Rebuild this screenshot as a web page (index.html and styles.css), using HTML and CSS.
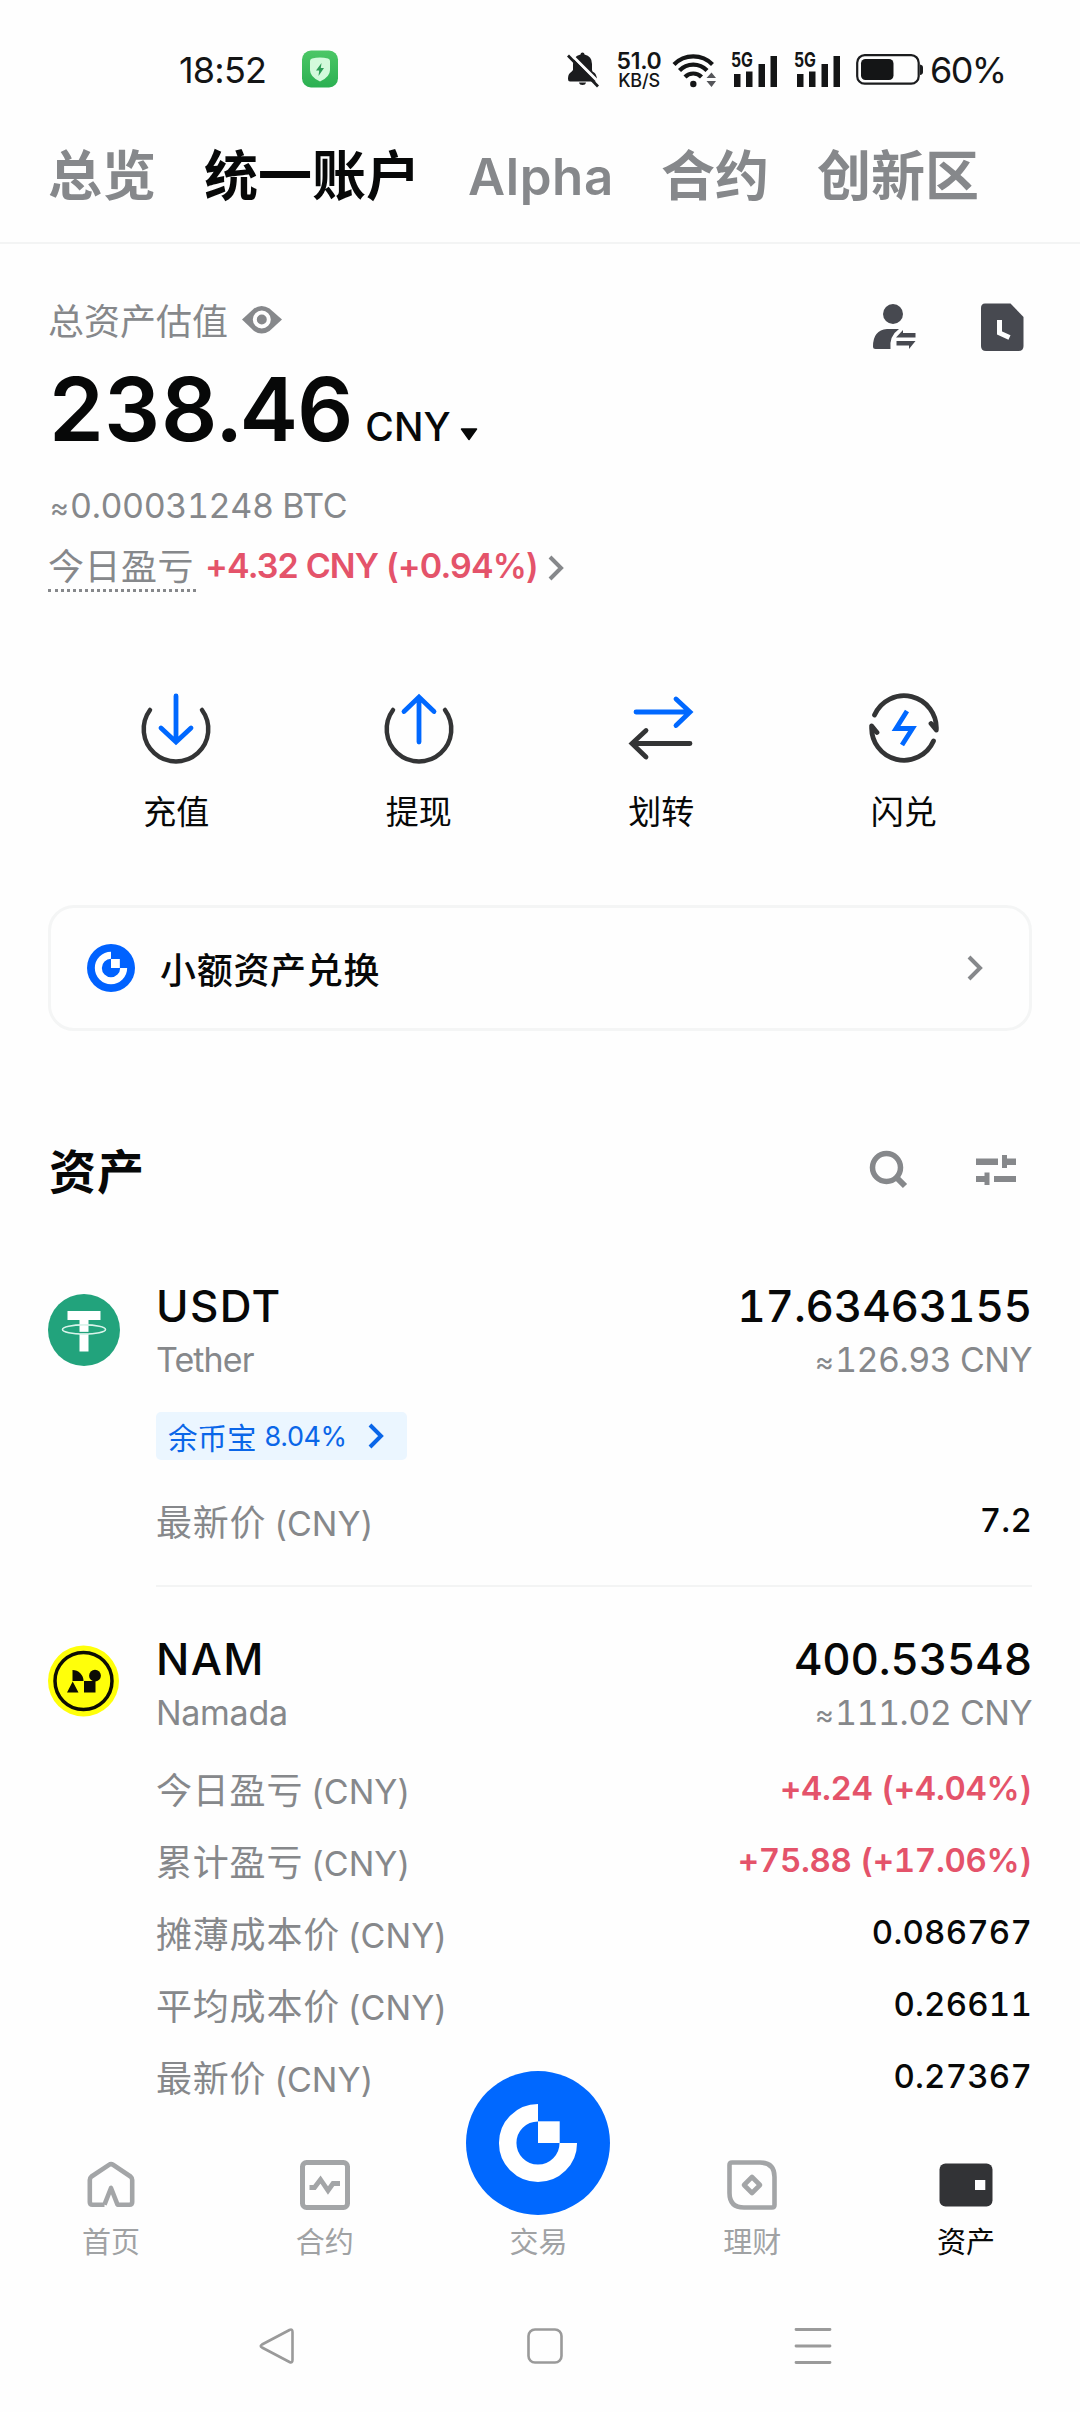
FILE: index.html
```html
<!DOCTYPE html>
<html lang="zh-CN">
<head>
<meta charset="utf-8">
<title>统一账户</title>
<link rel="stylesheet" href="styles.css">
</head>
<body>
<header class="status">
  <span class="status__time">18:52</span>
  <svg class="status__guard" width="36" height="38" viewBox="0 0 36 38"><defs><linearGradient id="guard" x1="0" y1="0" x2="0" y2="1"><stop offset="0" stop-color="#4cc766"/><stop offset="1" stop-color="#2bb052"/></linearGradient></defs><rect y=".5" width="36" height="37" rx="9" fill="url(#guard)"/><path d="M10 8.5Q18 6.500 26 8.500Q28 9 28 11V20Q28 27 18 31.500Q8 27 8 20V11Q8 9 10 8.500Z" fill="#d3fadb"/><path d="M19.500 13L14 20.500H17.200L16.500 26L22 18H18.800Z" fill="#2c9c55"/></svg>
  <svg class="status__bell" width="34" height="40" viewBox="0 0 34 40"><path d="M14.500 4.500Q14.500 2.500 16.500 2.500T18.500 4.500Q26 6 26 14V20Q26 21.500 28 22.500T31 28.500Q31 31.500 29 31.500H4Q2 31.500 2 29Q2 24.500 4 23T7 20V14Q7 6 14.500 4.500ZM13 32.500H20Q19.500 35 16.500 35T13 32.500Z" fill="#1b1c1e"/><path d="M3 2.500L34 33.500" stroke="#fefefe" stroke-width="3"/><path d="M2 5.500L32 36.500" stroke="#1b1c1e" stroke-width="2.800"/></svg>
  <span class="status__speed"><b>51.0</b><i>KB/S</i></span>
  <svg class="status__wifi" width="44" height="40" viewBox="0 0 44 40"><g fill="none" stroke="#141516" stroke-width="4.200"><path d="M2 14.500A27 27 0 0 1 40.500 14.500"/><path d="M7.500 20.500A19 19 0 0 1 35 20.500"/><path d="M13 27A11.500 11.500 0 0 1 29.500 27"/></g><circle cx="21.300" cy="34" r="3.200" fill="#141516"/><path d="M34.500 28L39.500 22.500L44 28ZM34.500 31L39.500 37L44 31Z" fill="#55565a"/></svg>
  <svg class="status__signal" width="48" height="40" viewBox="0 0 48 40"><text x="1" y="17" textLength="22" lengthAdjust="spacingAndGlyphs">5G</text><path d="M4 24h6.500v13H4zM16 21.500h6.500v15.500H16zM28.500 14H35v23h-6.500zM40.500 6H47v31h-6.500z" fill="#141516"/></svg>
  <svg class="status__signal" width="48" height="40" viewBox="0 0 48 40"><text x="1" y="17" textLength="22" lengthAdjust="spacingAndGlyphs">5G</text><path d="M4 24h6.500v13H4zM16 21.500h6.500v15.500H16zM28.500 14H35v23h-6.500zM40.500 6H47v31h-6.500z" fill="#141516"/></svg>
  <svg class="status__battery" width="68" height="40" viewBox="0 0 68 40"><rect x="1.200" y="5.200" width="61.500" height="28.500" rx="7.500" fill="none" stroke="#1b1c1e" stroke-width="2.200"/><rect x="5" y="9" width="32.500" height="21" rx="4.500" fill="#141516"/><path d="M64 14.500q3 .5 3 3v4.500q0 2.500-3 3z" fill="#1b1c1e"/></svg>
  <span class="status__percent">60%</span>
</header>

<nav class="tabs">
  <a>总览</a><a class="tabs__on">统一账户</a><a class="tabs__latin">Alpha</a><a>合约</a><a>创新区</a>
</nav>

<main class="page">
  <section class="overview">
    <div class="overview__main">
      <div class="overview__label">总资产估值
        <svg width="42" height="30" viewBox="0 0 42 30"><path d="M1 14.500L13 3.500Q20.500-1.500 28.500 3.500L41 14.500L28.500 26Q20.500 31 13 26Z" fill="#86888b"/><circle cx="20.800" cy="14.500" r="7" fill="#86888b" stroke="#fefefe" stroke-width="4"/></svg>
      </div>
      <div class="overview__total"><strong>238.46</strong><span>CNY</span><svg width="18" height="13" viewBox="0 0 18 13"><path d="M1.500 1H16.500L9 11.500Z" fill="#070808" stroke="#070808" stroke-width="1.500" stroke-linejoin="round"/></svg></div>
      <div class="overview__btc"><small>≈</small>0.00031248 BTC</div>
      <div class="overview__pnl"><span class="overview__today">今日盈亏</span><span class="overview__gain">+4.32 CNY (+0.94%)</span><svg width="18" height="26" viewBox="0 0 18 26"><path d="M3 2L14 13L3 24" fill="none" stroke="#86888b" stroke-width="4"/></svg></div>
    </div>
    <div class="overview__tools">
      <svg width="44" height="50" viewBox="0 0 44 50"><g fill="#474950"><circle cx="21" cy="11" r="10"/><path d="M15 26H27Q17 33 18.500 46H3.500Q1 46 1 43.500Q1 27 15 26Z"/><path d="M24 34.500L31 27V30H43.500V34.500ZM43.500 38L37 46V42.500H24.500V38Z"/></g></svg>
      <svg width="44" height="50" viewBox="0 0 44 50"><path d="M5 .5H30.500L43.500 14V43Q43.500 48 38.500 48H6Q1 48 1 43V5Q1 .5 5 .5Z" fill="#474950"/><path d="M19.500 17V30L29.500 34.500" fill="none" stroke="#fefefe" stroke-width="5"/></svg>
    </div>
  </section>

  <section class="actions">
    <a><svg width="76" height="76" viewBox="0 0 76 76"><path d="M12 20A32.300 32.300 0 1 0 64 20" fill="none" stroke="#333435" stroke-width="4.500" stroke-linecap="round"/><path d="M38 6V51M23 38L38 52L53 38" fill="none" stroke="#0068ff" stroke-width="4.800" stroke-linecap="round"/></svg>充值</a>
    <a><svg width="76" height="76" viewBox="0 0 76 76"><path d="M12 20A32.300 32.300 0 1 0 64 20" fill="none" stroke="#333435" stroke-width="4.500" stroke-linecap="round"/><path d="M38 52V8M23 21.500L38 7L53 21.500" fill="none" stroke="#0068ff" stroke-width="4.800" stroke-linecap="round"/></svg>提现</a>
    <a><svg width="76" height="76" viewBox="0 0 76 76"><path d="M13 22H66M53 9L67 22L53 35.500" fill="none" stroke="#0068ff" stroke-width="4.800" stroke-linecap="round"/><path d="M67 53.500H10M23 40.500L9 53.500L23 67" fill="none" stroke="#333435" stroke-width="4.800" stroke-linecap="round"/></svg>划转</a>
    <a><svg width="76" height="76" viewBox="0 0 76 76"><path d="M8.500 25A32.300 32.300 0 0 1 70.300 40L65 33.500M5.700 36L11 42.500M5.700 36A32.300 32.300 0 0 0 67.500 51" fill="none" stroke="#333435" stroke-width="4.800" stroke-linecap="round" stroke-linejoin="round"/><path d="M41 21L30 38.500H46.500L36 55" fill="none" stroke="#0068ff" stroke-width="4.800"/></svg>闪兑</a>
  </section>

  <a class="convert">
    <svg width="48" height="48" viewBox="0 0 144 144"><circle cx="72" cy="72" r="72" fill="#0062ff"/><path d="M72 34A38 38 0 1 0 110 72" fill="none" stroke="#fff" stroke-width="21"/><path d="M72 45H98.500V72H72Z" fill="#fff"/></svg>
    <span class="convert__text">小额资产兑换</span>
    <svg class="convert__go" width="18" height="26" viewBox="0 0 18 26"><path d="M3 2L14 13L3 24" fill="none" stroke="#86888b" stroke-width="4"/></svg>
  </a>

  <section class="assets">
    <div class="assets__head">
      <h2>资产</h2>
      <div class="assets__tools">
        <svg width="40" height="40" viewBox="0 0 40 40"><circle cx="17.500" cy="17.500" r="14" fill="none" stroke="#86888b" stroke-width="5.500"/><path d="M27 27L36 36" stroke="#86888b" stroke-width="6"/></svg>
        <svg width="42" height="40" viewBox="0 0 42 40"><path d="M1 8.500H23V15H1ZM27 5H32V8.500H41V15H32V18H27ZM1 26H9.500V22.500H14.500V35H9.500V32H1ZM19 26H41V32H19Z" fill="#86888b"/></svg>
      </div>
    </div>

    <article class="asset">
      <svg class="asset__coin asset__coin--usdt" width="72" height="72" viewBox="0 0 72 72"><circle cx="36" cy="36" r="36" fill="#22a37c"/><path d="M19.500 17H52.500V26H40.500V57.500H31.500V26H19.500Z" fill="#fff"/><ellipse cx="36" cy="35.500" rx="21.500" ry="4.600" fill="none" stroke="#d9f3ea" stroke-width="1.600"/><path d="M31 38.500H41" stroke="#22a37c" stroke-width="1.300"/></svg>
      <div class="asset__body">
        <div class="asset__line asset__line--name"><b class="asset__code">USDT</b><b class="asset__amount">17.63463155</b></div>
        <div class="asset__line asset__line--sub"><span class="asset__full">Tether</span><span><small>≈</small>126.93 CNY</span></div>
        <a class="earn">余币宝<span>8.04%</span><svg width="18" height="26" viewBox="0 0 18 26"><path d="M3 2L14 13L3 24" fill="none" stroke="#0a66e8" stroke-width="4"/></svg></a>
        <dl class="facts facts--usdt"><div><dt>最新价<i>(CNY)</i></dt><dd>7.2</dd></div></dl>
      </div>
    </article>

    <article class="asset asset--next">
      <svg class="asset__coin" width="72" height="72" viewBox="0 0 72 72"><circle cx="35.500" cy="36" r="35.500" fill="#ffff0a"/><circle cx="35.500" cy="36" r="28.500" fill="none" stroke="#0c0c04" stroke-width="3.500"/><path d="M24.500 25A11 11 0 0 1 35.500 36H24.500ZM24.700 36.500L30.500 47.500H19ZM36 36H47.500V47.500H36Z" fill="#0c0c04"/><circle cx="47" cy="30.700" r="5.900" fill="#0c0c04"/></svg>
      <div class="asset__body">
        <div class="asset__line asset__line--name"><b class="asset__code">NAM</b><b class="asset__amount">400.53548</b></div>
        <div class="asset__line asset__line--sub"><span class="asset__full asset__full--nam">Namada</span><span><small>≈</small>111.02 CNY</span></div>
        <dl class="facts">
          <div><dt>今日盈亏<i>(CNY)</i></dt><dd class="up">+4.24 (+4.04%)</dd></div>
          <div><dt>累计盈亏<i>(CNY)</i></dt><dd class="up">+75.88 (+17.06%)</dd></div>
          <div><dt>摊薄成本价<i>(CNY)</i></dt><dd>0.086767</dd></div>
          <div><dt>平均成本价<i>(CNY)</i></dt><dd>0.26611</dd></div>
          <div><dt>最新价<i>(CNY)</i></dt><dd>0.27367</dd></div>
        </dl>
      </div>
    </article>
  </section>
</main>

<nav class="dock">
  <a><svg width="50" height="50" viewBox="0 0 50 50"><path d="M18.500 44.700H6.500Q3.800 44.700 3.800 42V20Q3.800 18 5.500 16.500L23 4.800Q25 3.500 27 4.800L44.500 16.500Q46.200 18 46.200 20V42Q46.200 44.700 43.500 44.700H31.500L25 28L18.500 44.700" fill="none" stroke="#a3a5a7" stroke-width="4.600" stroke-linejoin="round"/></svg>首页</a>
  <a><svg width="50" height="50" viewBox="0 0 50 50"><rect x="2.500" y="2.500" width="45" height="45" rx="4" fill="none" stroke="#a3a5a7" stroke-width="5"/><path d="M9.500 27.500H14.500L20.500 19.500L28 30.500L33 23.500H40" fill="none" stroke="#a3a5a7" stroke-width="4.800"/></svg>合约</a>
  <a class="dock__trade"><svg width="144" height="144" viewBox="0 0 144 144"><circle cx="72" cy="72" r="72" fill="#0068ff"/><path d="M72 41.700A30.300 30.300 0 1 0 102.300 72" fill="none" stroke="#fff" stroke-width="17.500"/><path d="M72 50.300H93.700V72H72Z" fill="#fff"/></svg>交易</a>
  <a><svg width="50" height="50" viewBox="0 0 50 50"><path d="M5 2.500H33Q47.500 2.500 47.500 17V45Q47.500 47.500 45 47.500H17Q2.500 47.500 2.500 33V5Q2.500 2.500 5 2.500Z" fill="none" stroke="#a3a5a7" stroke-width="4.600"/><path d="M25 17L33 25L25 33L17 25Z" fill="none" stroke="#a3a5a7" stroke-width="4.600" stroke-linejoin="round"/></svg>理财</a>
  <a class="dock__on"><svg width="54" height="50" viewBox="0 0 54 50"><rect x=".5" y="3.500" width="53" height="43" rx="6" fill="#323336"/><path d="M36 20H46.300V30H36Z" fill="#fff"/></svg>资产</a>
</nav>

<footer class="keys">
  <svg width="36" height="36" viewBox="0 0 36 36"><path d="M30.500 2Q33.500 .5 33.500 4V32Q33.500 35.500 30.500 34L3 19.500Q.5 18 3 16.500Z" fill="none" stroke="#9a9a9a" stroke-width="2.600" stroke-linejoin="round"/></svg>
  <svg width="36" height="36" viewBox="0 0 36 36"><rect x="1.500" y="1.500" width="33" height="33" rx="6.500" fill="none" stroke="#9a9a9a" stroke-width="2.600"/></svg>
  <svg width="36" height="36" viewBox="0 0 36 36"><path d="M1 1.500H35M1 18H35M1 34.500H35" stroke="#9a9a9a" stroke-width="2.800" stroke-linecap="round"/></svg>
</footer>
</body>
</html>
```
FILE: styles.css
```css
* { box-sizing: border-box; margin: 0; padding: 0; }
body {
  width: 1080px;
  height: 2412px;
  overflow: hidden;
  display: flex;
  flex-direction: column;
  background: #fefefe;
  color: #070808;
  font-family: Inter, "Noto Sans CJK SC", sans-serif;
}
svg { display: block; flex: none; overflow: visible; }
b, i, strong, h2 { font-style: normal; }

/* system status bar */
.status { display: flex; align-items: center; height: 140px; padding-left: 179px; color: #141516; flex: none; }
.status__time { width: 123px; font-size: 36px; letter-spacing: -.8px; padding-bottom: 1px; }
.status__guard { margin: 0 228px 2px 0; }
.status__speed { width: 46px; height: 40px; margin-left: 16px; padding-top: 2px; display: flex; flex-direction: column; align-items: center; line-height: 19px; }
.status__speed b { font-size: 23px; font-weight: 600; letter-spacing: -.3px; }
.status__speed i { font-size: 18px; font-weight: 500; letter-spacing: -.2px; }
.status__wifi { margin-left: 10px; }
.status__signal { margin-left: 14px; }
.status__signal + .status__signal { margin-left: 15px; }
.status__signal text { font: 700 20px Inter, sans-serif; fill: #141516; }
.status__battery { margin-left: 15px; }
.status__percent { margin-left: 6px; padding-bottom: 1px; font-size: 36px; letter-spacing: -1.600px; }

/* account tabs */
.tabs { flex: none; display: flex; align-items: center; gap: 48px; height: 104px; padding: 0 48px 28px; border-bottom: 2px solid #f3f4f4; font-size: 54px; font-weight: 700; line-height: 70px; color: #86888b; white-space: nowrap; }
.tabs__on { color: #070808; }
.tabs .tabs__latin { font-size: 51px; font-weight: 600; letter-spacing: .6px; width: 145px; }

.page { height: 1867px; padding: 56px 48px 0; flex: none; }

/* total valuation */
.overview { display: flex; justify-content: space-between; }
.overview__label { display: flex; gap: 13px; font-size: 36px; line-height: 44px; color: #86888b; }
.overview__label svg { margin-top: 5px; }
.overview__total { display: flex; align-items: baseline; height: 100px; margin-top: 15px; line-height: 100px; }
.overview__total strong { font-size: 88px; font-weight: 600; font-feature-settings: "tnum"; letter-spacing: -.5px; }
.overview__total span { margin-left: 12px; font-size: 39px; font-weight: 500; }
.overview__total svg { margin: 0 0 4px 9px; }
.overview__btc { height: 40px; margin-top: 27px; padding-left: 2px; font-size: 34px; line-height: 40px; color: #86888b; font-feature-settings: "tnum"; letter-spacing: -.4px; }
small { display: inline-block; width: 20px; font-size: 29px; line-height: 30px; letter-spacing: -1px; }
.overview__pnl { display: flex; margin-top: 20px; height: 46px; }
.overview__today { width: 148px; font-size: 36px; line-height: 43px; color: #86888b; border-bottom: 3px dotted #86888b; letter-spacing: .5px; }
.overview__gain { margin-left: 9px; font-size: 34px; font-weight: 600; line-height: 40px; letter-spacing: -.85px; color: #e4536a; white-space: nowrap; }
.overview__pnl svg { margin: 9px 0 0 9px; }
.overview__tools { display: flex; gap: 64px; padding: 3px 8px 0 0; }

/* quick actions */
.actions { display: flex; margin: 98px 7px 0; }
.actions a { flex: 1; display: flex; flex-direction: column; align-items: center; gap: 26px; font-size: 33px; line-height: 40px; }

.convert { display: flex; align-items: center; height: 126px; margin-top: 73px; padding: 0 45px 0 36px; border: 3px solid #f4f5f5; border-radius: 26px; }
.convert__text { margin-left: 25px; font-size: 36px; font-weight: 500; letter-spacing: .7px; }
.convert__go { margin-left: auto; }

/* asset list */
.assets__head { display: flex; justify-content: space-between; align-items: center; margin-top: 111px; height: 60px; }
.assets__head h2 { padding-left: 1px; font-size: 47px; font-weight: 700; line-height: 60px; letter-spacing: 1px; }
.assets__tools { display: flex; gap: 66px; margin: 0 15px 5px 0; }
.asset { display: flex; gap: 36px; margin-top: 79px; }
.asset--next { margin-top: 0; padding-top: 47px; }
.asset__coin { margin-top: 11px; }
.asset__coin--usdt { margin-top: 13px; }
.asset__body { flex: 1; }
.asset__line { display: flex; justify-content: space-between; }
.asset__line--name { font-size: 44px; line-height: 50px; }
.asset__line--name b { font-weight: 500; }
.asset__code { letter-spacing: 1.4px; }
.asset__line--name .asset__amount { font-feature-settings: "tnum"; letter-spacing: -.2px; }
.asset__line--sub { height: 40px; margin-top: 9px; font-size: 34px; line-height: 40px; color: #86888b; font-feature-settings: "tnum"; letter-spacing: -.5px; }
.asset__full { letter-spacing: -.9px; }
.asset__full--nam { letter-spacing: -.3px; }
.earn { display: flex; align-items: center; width: 251px; height: 48px; margin-top: 32px; padding-left: 12px; border-radius: 5px; background: #ebf6ff; color: #0a66e8; font-size: 29.500px; }
.earn span { margin-left: 8px; font-size: 27px; letter-spacing: -.4px; }
.earn svg { margin-left: 20px; }
.facts { display: flex; flex-direction: column; gap: 28px; margin-top: 36px; }
.facts--usdt { margin-top: 41px; padding-bottom: 40px; border-bottom: 2px solid #f3f4f4; }
.facts div { display: flex; justify-content: space-between; height: 44px; }
.facts dt { font-size: 36px; letter-spacing: .8px; line-height: 44px; color: #86888b; }
.facts i { margin-left: 8px; font-size: 34px; letter-spacing: .1px; }
.facts dd { font-size: 33px; font-weight: 500; line-height: 39px; font-feature-settings: "tnum"; letter-spacing: .2px; }
.facts .up { color: #e4536a; font-weight: 600; letter-spacing: -.3px; }

/* bottom navigation */
.dock { flex: none; display: flex; height: 179px; padding: 49px 7px 0 4px; }
.dock a { flex: 1; display: flex; flex-direction: column; align-items: center; gap: 13px; font-size: 29px; line-height: 40px; color: #a0a2a4; }
.dock .dock__on { color: #070808; }
.dock .dock__trade { margin-top: -89px; gap: 8px; }

.keys { display: flex; gap: 232px; padding: 38px 0 0 259px; }
```
